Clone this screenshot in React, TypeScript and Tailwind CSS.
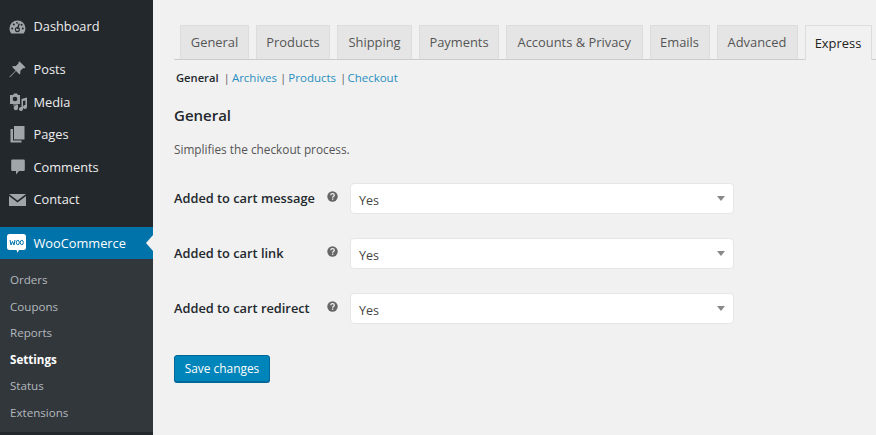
const font = "font-['Open_Sans','Noto_Sans',sans-serif]";

function Gauge() {
  return (
    <svg width="17" height="14" viewBox="0 0 17 14">
      <path d="M8.5 0.5A8 8 0 0 0 0.5 8.5c0 2 .7 3.7 1.9 5h12.2a8 8 0 0 0 1.9-5 8 8 0 0 0-8-8z" fill="#a0a5aa" />
      <path d="M8.6 9 10.2 3.6" stroke="#23282d" strokeWidth="1.4" />
      <circle cx="8.4" cy="9.6" r="2" fill="none" stroke="#23282d" strokeWidth="1.1" />
      <circle cx="3.2" cy="8.4" r="1" fill="#23282d" />
      <circle cx="4.8" cy="4.6" r="1" fill="#23282d" />
      <circle cx="8" cy="2.8" r="0.9" fill="#23282d" />
      <circle cx="13.8" cy="8.4" r="1" fill="#23282d" />
      <circle cx="12.6" cy="4.8" r="1" fill="#23282d" />
    </svg>
  );
}
function Pin() {
  return (
    <svg width="17" height="17" viewBox="0 0 17 17">
      <path d="M10.6 0.6 16.4 6.3l-1.2 1.1-1-.4-3 3c.5 1.400.2 2.700-.6 3.500L7 9.900 1 16.200.4 15.700 6.600 9.400 3 5.800c.9-.8 2.300-1.100 3.600-.6l3-3-.2-1z" fill="#a0a5aa" />
    </svg>
  );
}
function Media() {
  return (
    <svg width="18" height="18" viewBox="0 0 18 18">
      <path d="M1 2h3l1-1.500h3L9 2h2v9H1z" fill="#a0a5aa" />
      <circle cx="6" cy="6" r="2.300" fill="#23282d" />
      <path d="M4 11.500h5V15a2.200 2.200 0 1 1-2-2.200V12.500H4z" fill="#a0a5aa" />
      <path d="M12.500 6 18 4.500v9.500a2 2 0 1 1-1.600-2V7.500l-2.400.6V16a2 2 0 1 1-1.500-2z" fill="#a0a5aa" />
    </svg>
  );
}
function Pages() {
  return (
    <svg width="15" height="17" viewBox="0 0 15 17">
      <path d="M4 0h10.500v13.500H4z" fill="#a0a5aa" />
      <path d="M0.500 3H3v11.500h8.500V16.500H0.500z" fill="#a0a5aa" />
    </svg>
  );
}
function Comment() {
  return (
    <svg width="14" height="16" viewBox="0 0 14 16">
      <path d="M1.500 0.500h11A1.300 1.300 0 0 1 13.800 1.800v8.900a1.300 1.300 0 0 1-1.300 1.300H8L5 15.500V12H1.500A1.300 1.300 0 0 1 .2 10.700V1.800A1.300 1.300 0 0 1 1.500.5z" fill="#a0a5aa" />
    </svg>
  );
}
function Mail() {
  return (
    <svg width="17" height="12" viewBox="0 0 17 12">
      <path d="M0 0h17L8.500 6.500z" fill="#a0a5aa" />
      <path d="M0 2 8.500 8.500 17 2v10H0z" fill="#a0a5aa" />
    </svg>
  );
}
function Woo() {
  return (
    <svg width="19" height="20" viewBox="0 0 19 20">
      <path d="M2.500 0h14A2.500 2.500 0 0 1 19 2.500v11a2.500 2.500 0 0 1-2.500 2.500H12l-1.500 2.800L9.500 16h-7A2.500 2.500 0 0 1 0 13.500v-11A2.500 2.500 0 0 1 2.500 0z" fill="#fff" />
      <path d="M3 6l1 5 1.500-3.500L7 11l1-5" fill="none" stroke="#0073aa" strokeWidth="1" />
      <ellipse cx="10.800" cy="8.500" rx="1.500" ry="2.200" fill="none" stroke="#0073aa" strokeWidth="1" />
      <ellipse cx="14.800" cy="8.500" rx="1.500" ry="2.200" fill="none" stroke="#0073aa" strokeWidth="1" />
    </svg>
  );
}
function Help() {
  return (
    <svg width="11" height="11" viewBox="0 0 11 11" className="mb-[5px]">
      <circle cx="5.500" cy="5.500" r="5.200" fill="#666" />
      <path d="M3.700 4.300c0-1 .8-1.600 1.800-1.600s1.800.6 1.800 1.500c0 1.300-1.700 1.200-1.700 2.500" fill="none" stroke="#f1f1f1" strokeWidth="1.200" />
      <rect x="5" y="7.500" width="1.300" height="1.300" fill="#f1f1f1" />
    </svg>
  );
}

const menu = [
  { label: "Posts", icon: <Pin /> },
  { label: "Media", icon: <Media /> },
  { label: "Pages", icon: <Pages /> },
  { label: "Comments", icon: <Comment /> },
  { label: "Contact", icon: <Mail /> },
];
const sub = ["Orders", "Coupons", "Reports", "Settings", "Status", "Extensions"];
const tabs = [
  { label: "General", w: "w-[69px]" },
  { label: "Products", w: "w-[74px]" },
  { label: "Shipping", w: "w-[75px]" },
  { label: "Payments", w: "w-[80px]" },
  { label: "Accounts & Privacy", w: "w-[136.5px]" },
  { label: "Emails", w: "w-[60px]" },
  { label: "Advanced", w: "w-[81px]" },
];
const fields = ["Added to cart message", "Added to cart link", "Added to cart redirect"];

function Row({ icon, label }: { icon: React.ReactNode; label: string }) {
  return (
    <div className="flex h-[32.5px] items-center text-[12.8px] text-[#eeeeee]">
      <div className="flex w-[33.5px] shrink-0 justify-center pl-[2px]">{icon}</div>
      <span>{label}</span>
    </div>
  );
}

export default function App() {
  return (
    <div className={`${font} flex h-[435px] w-[876px] overflow-hidden bg-[#f1f1f1]`}>
      <aside className="flex w-[153px] shrink-0 flex-col bg-[#23282d] pt-[10.5px]">
        <Row icon={<Gauge />} label="Dashboard" />
        <div className="h-[10.5px]" />
        {menu.map((m) => (
          <Row key={m.label} icon={m.icon} label={m.label} />
        ))}
        <div className="h-[11px]" />
        <div className="relative flex h-[32px] items-center bg-[#0073aa] text-[12.8px] text-white">
          <div className="flex w-[33.5px] shrink-0 justify-center pt-[2px]">
            <Woo />
          </div>
          <span className="pt-[1px]">WooCommerce</span>
          <div className="absolute right-0 top-[8px] h-0 w-0 border-y-[8px] border-r-[7px] border-y-transparent border-r-[#f1f1f1]" />
        </div>
        <div className="flex h-[173px] flex-col bg-[#32373c] pt-[7.75px]">
          {sub.map((s) => (
            <div
              key={s}
              className={`flex h-[26.5px] items-center pl-[10px] text-[11.6px] ${s === "Settings" ? "font-bold text-white" : "text-[#b4b9be]"}`}
            >
              {s}
            </div>
          ))}
        </div>
      </aside>
      <main className="min-w-0 flex-1 pl-[21px] pt-[25px]">
        <div className="flex h-[35px] gap-[7px] border-b border-[#cccccc] pl-[6px]">
          {tabs.map((t) => (
            <div
              key={t.label}
              className={`flex h-[34px] ${t.w} shrink-0 items-center justify-center border border-b-0 border-[#dddddd] bg-[#e5e5e5] pt-[1px] text-[12.9px] font-medium text-[#555555]`}
            >
              {t.label}
            </div>
          ))}
          <div className="flex h-[35px] w-[67px] shrink-0 items-center justify-center border border-b-0 border-[#dddddd] bg-[#f1f1f1] pt-[1px] text-[12.9px] font-medium text-[#222222]">
            Express
          </div>
        </div>
        <div className="mt-[9px] flex h-[18px] items-center pl-[2px] text-[11.5px] text-[#2a8fc0]">
          <span className="text-[11.2px] font-semibold text-[#23282d]">General</span>
          <span className="ml-[5px] mr-[2px] text-[#666666]">|</span>
          <span>Archives</span>
          <span className="ml-[3px] mr-[2px] text-[#666666]">|</span>
          <span>Products</span>
          <span className="ml-[4px] mr-[1px] text-[#666666]">|</span>
          <span>Checkout</span>
        </div>
        <h2 className="mt-[17px] text-[15px] leading-[22px] font-semibold text-[#23282d]">General</h2>
        <p className="mt-[14px] text-[11.8px] leading-[18px] text-[#555555]">Simplifies the checkout process.</p>
        <div className="mt-[25px] flex flex-col gap-[24px]">
          {fields.map((f) => (
            <div key={f} className="flex h-[31px] items-center">
              <label className="w-[153px] shrink-0 text-[12.8px] font-semibold text-[#23282d]">{f}</label>
              <Help />
              <div className="ml-[12px] flex h-[31px] w-[384px] shrink-0 items-center justify-between rounded-[4px] border border-[#e6e6e6] bg-white pl-[8px] pr-[8px]">
                <span className="pt-[5px] text-[12.5px] text-[#444444]">Yes</span>
                <div className="h-0 w-0 border-x-[4px] border-t-[5px] border-x-transparent border-t-[#888888]" />
              </div>
            </div>
          ))}
        </div>
        <button className="mt-[31px] h-[27px] w-[96px] rounded-[3px] border border-[#006799] bg-[#0085ba] text-[11.9px] text-white shadow-[0_1px_0_#006799]">
          Save changes
        </button>
      </main>
    </div>
  );
}
